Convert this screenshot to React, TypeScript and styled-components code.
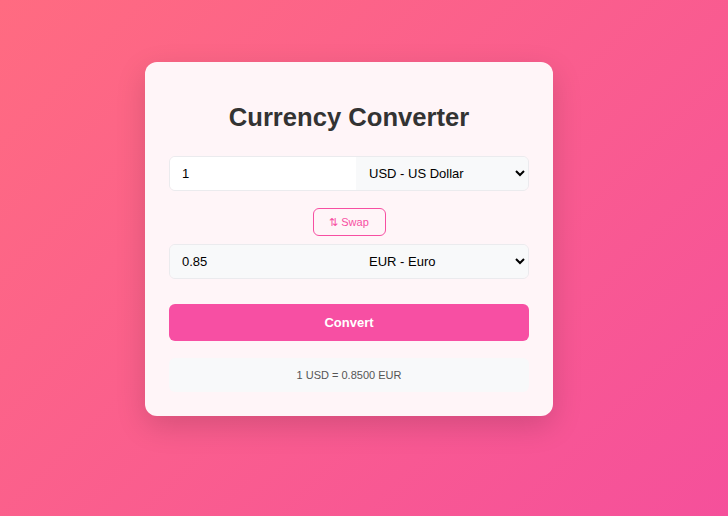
import React, { useState } from "react";
import styled, { createGlobalStyle } from "styled-components";

const GlobalStyle = createGlobalStyle`
  html, body {
    margin: 0;
    padding: 0;
    height: 100%;
  }
  body {
    font-family: "Liberation Sans", Arial, sans-serif;
  }
  #root {
    height: 100%;
  }
`;

const Page = styled.div`
  min-height: 100vh;
  box-sizing: border-box;
  display: flex;
  justify-content: center;
  padding: 62px 30px 0 0;
  background: linear-gradient(135deg, #ff6b81 0%, #f5509b 100%);
`;

const Card = styled.div`
  width: 408px;
  height: 354px;
  box-sizing: border-box;
  padding: 24px;
  background: #fff5f8;
  border-radius: 12px;
  box-shadow: 0 10px 30px rgba(0, 0, 0, 0.15);
  display: flex;
  flex-direction: column;
`;

const Title = styled.h2`
  margin: 16px 0 24px;
  font-size: 25.6px;
  line-height: 30px;
  font-weight: 700;
  color: #333;
  text-align: center;
`;

const Row = styled.div`
  display: flex;
  height: 35px;
  box-sizing: border-box;
  border: 1px solid #ebebee;
  border-radius: 6px;
  overflow: hidden;
`;

const AmountInput = styled.input<{ $readOnly?: boolean }>`
  flex: 1;
  min-width: 0;
  border: none;
  outline: none;
  padding: 0 12px;
  font-family: inherit;
  font-size: 13px;
  color: #000;
  background: ${(p) => (p.$readOnly ? "#f8f9fa" : "#fff")};
`;

const CurrencySelect = styled.select`
  width: 172px;
  border: none;
  outline: none;
  padding: 0 8px 0 9px;
  font-family: inherit;
  font-size: 13px;
  color: #000;
  background: #f8f9fa;
`;

const SwapWrap = styled.div`
  display: flex;
  justify-content: center;
  margin: 17px 0 8px;
`;

const SwapButton = styled.button`
  height: 28px;
  width: 73px;
  box-sizing: border-box;
  border: 1px solid #f74fa2;
  border-radius: 6px;
  background: transparent;
  color: #f74fa2;
  font-family: inherit;
  font-size: 11px;
  cursor: pointer;
`;

const ConvertButton = styled.button`
  margin-top: 25px;
  height: 37px;
  border: none;
  border-radius: 6px;
  background: #f74fa3;
  color: #fff;
  font-family: inherit;
  font-size: 13px;
  font-weight: 700;
  cursor: pointer;
`;

const Result = styled.div`
  margin-top: 17px;
  height: 34px;
  display: flex;
  align-items: center;
  justify-content: center;
  border-radius: 6px;
  background: #f8f9fa;
  color: #555;
  font-size: 11px;
`;

const currencies = [
  { code: "USD", name: "US Dollar" },
  { code: "EUR", name: "Euro" },
  { code: "GBP", name: "British Pound" },
  { code: "JPY", name: "Japanese Yen" },
];

export default function App() {
  const [amount, setAmount] = useState("1");
  const [from, setFrom] = useState("USD");
  const [to, setTo] = useState("EUR");

  const swap = () => {
    setFrom(to);
    setTo(from);
  };

  return (
    <>
      <GlobalStyle />
      <Page>
        <Card>
          <Title>Currency Converter</Title>
          <Row>
            <AmountInput value={amount} onChange={(e) => setAmount(e.target.value)} />
            <CurrencySelect value={from} onChange={(e) => setFrom(e.target.value)}>
              {currencies.map((c) => (
                <option key={c.code} value={c.code}>
                  {c.code} - {c.name}
                </option>
              ))}
            </CurrencySelect>
          </Row>
          <SwapWrap>
            <SwapButton onClick={swap}>⇅ Swap</SwapButton>
          </SwapWrap>
          <Row>
            <AmountInput $readOnly readOnly value="0.85" />
            <CurrencySelect value={to} onChange={(e) => setTo(e.target.value)}>
              {currencies.map((c) => (
                <option key={c.code} value={c.code}>
                  {c.code} - {c.name}
                </option>
              ))}
            </CurrencySelect>
          </Row>
          <ConvertButton>Convert</ConvertButton>
          <Result>1 USD = 0.8500 EUR</Result>
        </Card>
      </Page>
    </>
  );
}
